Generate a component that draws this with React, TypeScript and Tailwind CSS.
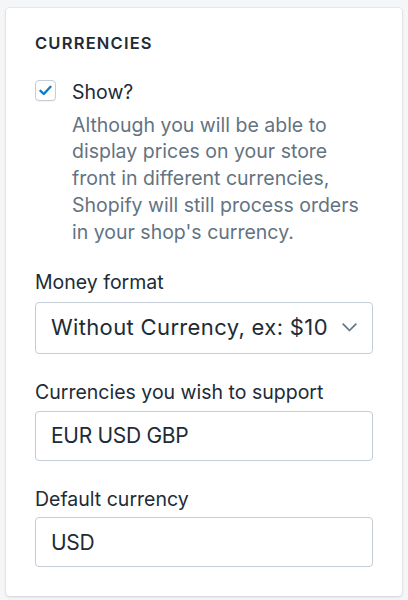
import React from "react";

export default function App() {
  return (
    <div
      className="w-[408px] h-[600px] bg-[#f4f6f8] pt-[8px] px-[6px] text-[#212b36]"
      style={{ fontFamily: "Inter, 'Noto Sans', sans-serif" }}
    >
      <div className="bg-white rounded-[4px] shadow-[0_0_0_1px_rgba(63,63,68,0.05),0_1px_3px_0_rgba(63,63,68,0.15)] h-[588px] px-[29px] pt-[25px]">
        <h2 className="text-[16.5px] leading-[20px] font-semibold tracking-[1.2px] uppercase text-[#212b36]">
          Currencies
        </h2>
        <div className="mt-[26px] flex gap-[16px]">
          <div className="w-[21px] h-[21px] mt-[1px] shrink-0 rounded-[4px] border border-[#c4cdd5] bg-white flex items-center justify-center shadow-[0_1px_0_0_rgba(22,29,37,0.05)]">
            <svg width="13" height="11" viewBox="0 0 13 11" fill="none">
              <path d="M1.5 5.8L4.8 9L11.5 1.8" stroke="#137ac8" strokeWidth="2.4" strokeLinecap="round" strokeLinejoin="round" />
            </svg>
          </div>
          <div className="flex flex-col">
            <span className="text-[19.5px] leading-[26.7px]">Show?</span>
            <p className="mt-[6px] text-[19.5px] leading-[26.7px] text-[#637381]">
              Although you will be able to display prices on your store front in different currencies, Shopify will still process orders in your shop's currency.
            </p>
          </div>
        </div>
        <div className="mt-[24px]">
          <label className="block text-[19.5px] leading-[26.7px]">Money format</label>
          <div className="mt-[6px] h-[52px] rounded-[4px] border border-[#c4cdd5] bg-white flex items-center justify-between pl-[15px] pr-[15px]">
            <span className="text-[22px] tracking-[0.35px] text-[#212b36]">Without Currency, ex: $10</span>
            <svg width="15" height="9" viewBox="0 0 15 9" fill="none">
              <path d="M1.2 1.2L7.5 7.5L13.8 1.2" stroke="#637381" strokeWidth="1.7" strokeLinecap="round" strokeLinejoin="round" />
            </svg>
          </div>
        </div>
        <div className="mt-[25px]">
          <label className="block text-[19.5px] leading-[26.7px]">Currencies you wish to support</label>
          <div className="mt-[5px] h-[50px] rounded-[4px] border border-[#c4cdd5] bg-white flex items-center pl-[15px]">
            <span className="text-[21px] tracking-[-0.3px]">EUR USD GBP</span>
          </div>
        </div>
        <div className="mt-[25px]">
          <label className="block text-[19.5px] leading-[26.7px]">Default currency</label>
          <div className="mt-[5px] h-[50px] rounded-[4px] border border-[#c4cdd5] bg-white flex items-center pl-[15px]">
            <span className="text-[21px] tracking-[-0.3px]">USD</span>
          </div>
        </div>
      </div>
    </div>
  );
}
